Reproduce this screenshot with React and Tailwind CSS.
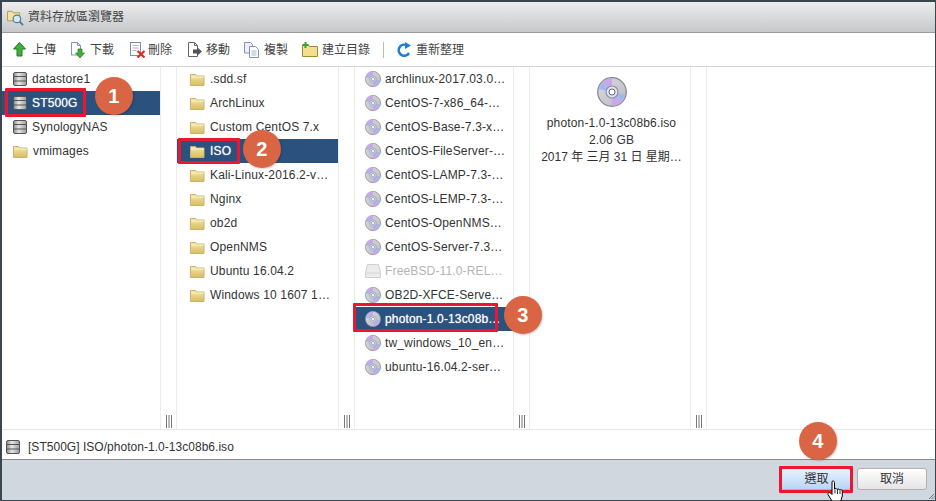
const FONT = "font-['Liberation_Sans','Noto_Sans_CJK_TC',sans-serif]";

function Db({ className = "" }) {
  return (
    <svg width="14" height="14" viewBox="0 0 14 14" className={className}>
      <defs>
        <linearGradient id="dbg" x1="0" x2="1" y1="0" y2="0">
          <stop offset="0" stopColor="#8a8a8a" />
          <stop offset="0.4" stopColor="#e6e6e6" />
          <stop offset="1" stopColor="#9c9c9c" />
        </linearGradient>
      </defs>
      <rect x="0.5" y="0.5" width="13" height="13" rx="1.5" fill="url(#dbg)" stroke="#555" />
      <path d="M1 4.500h12M1 9h12" stroke="#555" strokeWidth="1" />
    </svg>
  );
}

function Folder({ className = "" }) {
  return (
    <svg width="15" height="13" viewBox="0 0 15 13" className={className}>
      <defs>
        <linearGradient id="fg" x1="0" x2="0" y1="0" y2="1">
          <stop offset="0" stopColor="#f6e6a6" />
          <stop offset="1" stopColor="#d9bd62" />
        </linearGradient>
      </defs>
      <path d="M0.5 3V1.500h5l1 1.500h7.500V12.500H0.5z" fill="url(#fg)" stroke="#c8b26e" />
      <path d="M1 4h13" stroke="#fbf3cf" />
    </svg>
  );
}

function Cd({ size = 16, className = "" }) {
  const id = "cd" + size;
  return (
    <svg width={size} height={size} viewBox="0 0 30 30" className={className}>
      <defs>
        <linearGradient id={id} x1="0" x2="1" y1="0" y2="1">
          <stop offset="0" stopColor="#dcdce0" />
          <stop offset="1" stopColor="#b8b8c0" />
        </linearGradient>
      </defs>
      <circle cx="15" cy="15" r="14.3" fill={"url(#" + id + ")"} stroke="#85858c" strokeWidth="1.2" />
      <path d="M15 15L5 5A14 14 0 0 1 15 1z" fill="#c8a8e8" />
      <path d="M15 15L5 5A14 14 0 0 0 1.500 12z" fill="#a0b8ec" />
      <path d="M15 15L25 25A14 14 0 0 1 15 29z" fill="#c8a8e8" />
      <path d="M15 15L25 25A14 14 0 0 0 28.500 18z" fill="#a0b8ec" />
      <circle cx="15" cy="15" r="6" fill="#e0e2ec" stroke="#8e94aa" strokeWidth="1.2" />
      <circle cx="15" cy="15" r="3" fill="#fff" stroke="#666c84" strokeWidth="1" />
    </svg>
  );
}

function Drive() {
  return (
    <svg width="16" height="14" viewBox="0 0 16 14" className="shrink-0">
      <path d="M2.500 0.5h11L15.500 9v4.500H0.5V9z" fill="#ececec" stroke="#d0d0d0" />
      <path d="M1 9h14" stroke="#d4d4d4" />
    </svg>
  );
}

const col1 = [
  { t: "datastore1", i: "db" },
  { t: "ST500G", i: "db", sel: true },
  { t: "SynologyNAS", i: "db" },
  { t: "vmimages", i: "folder" },
];
const col2 = [".sdd.sf", "ArchLinux", "Custom CentOS 7.x", "ISO", "Kali-Linux-2016.2-v…", "Nginx", "ob2d", "OpenNMS", "Ubuntu 16.04.2", "Windows 10 1607 1…"].map(
  (t) => ({ t, i: "folder", sel: t === "ISO" })
);
const col3 = [
  "archlinux-2017.03.0…",
  "CentOS-7-x86_64-…",
  "CentOS-Base-7.3-x…",
  "CentOS-FileServer-…",
  "CentOS-LAMP-7.3-…",
  "CentOS-LEMP-7.3-…",
  "CentOS-OpenNMS…",
  "CentOS-Server-7.3…",
  "FreeBSD-11.0-REL…",
  "OB2D-XFCE-Serve…",
  "photon-1.0-13c08b…",
  "tw_windows_10_en…",
  "ubuntu-16.04.2-ser…",
].map((t) => ({ t, i: t.startsWith("FreeBSD") ? "hd" : "cd", sel: t.startsWith("photon"), dim: t.startsWith("FreeBSD") }));

function Badge({ n, className }) {
  return (
    <div className={"absolute w-[38px] h-[38px] rounded-full bg-[#d96544] text-white text-[20px] font-bold flex items-center justify-center shadow-[1px_1px_2px_rgba(0,0,0,0.2)] " + className}>
      {n}
    </div>
  );
}

function RedBox({ className }) {
  return <div className={"absolute border-[3px] border-[#e8182e] rounded-[1px] " + className} />;
}

function Row({ item, indent }) {
  return (
    <div className={"h-6 flex items-center whitespace-nowrap " + indent + " " + (item.sel ? "bg-[#2b527f] text-white [text-shadow:0_0_1px_rgba(255,255,255,0.7)]" : item.dim ? "text-[#b4b4b4]" : "text-[#333]")}>
      {item.i === "db" && <Db className="shrink-0 mr-[5px]" />}
      {item.i === "folder" && <Folder className="shrink-0 mr-[5px]" />}
      {item.i === "cd" && <Cd size={16} className="shrink-0 mr-[4px]" />}
      {item.i === "hd" && <div className="mr-[4px]"><Drive /></div>}
      <span>{item.t}</span>
    </div>
  );
}

function Grip() {
  return (
    <div className="w-[17px] border-x border-[#ececec] shrink-0 flex items-end justify-center pb-[1px]">
      <svg width="8" height="13" viewBox="0 0 8 13">
        <path d="M1.500 0v13M4 0v13M6.500 0v13" stroke="#777" strokeWidth="1" />
      </svg>
    </div>
  );
}

function Column({ items, width, indent, children }) {
  return (
    <div className={"relative shrink-0 " + width}>
      {items.map((it) => (
        <Row key={it.t} item={it} indent={indent} />
      ))}
      {children}
    </div>
  );
}

function Tool({ icon, label, className }) {
  return (
    <div className={"flex items-center whitespace-nowrap " + className}>
      {icon}
      <span>{label}</span>
    </div>
  );
}

const IUp = (
  <svg width="13" height="15" viewBox="0 0 13 15">
    <path d="M6.500 0.5L12.500 7H9V14H4V7H0.5z" fill="#3fae3a" stroke="#217c1e" />
  </svg>
);
const IDown = (
  <svg width="15" height="16" viewBox="0 0 15 16">
    <path d="M1.500 0.5h6l3 3V13h-9z" fill="#fff" stroke="#7d95b8" />
    <path d="M7.500 0.5v3h3" fill="none" stroke="#7d95b8" />
    <path d="M8 7h4v4h2.500l-4.500 5-4.500-5H8z" fill="#3fae3a" stroke="#217c1e" strokeWidth="0.7" />
  </svg>
);
const IDel = (
  <svg width="15" height="16" viewBox="0 0 15 16">
    <rect x="0.5" y="0.5" width="10" height="13" fill="#fff" stroke="#7d8ea8" />
    <path d="M2.500 3.500h6M2.500 6h6M2.500 8.500h4" stroke="#b0b8c8" />
    <path d="M7.500 9l7 6.500M14.500 9l-7 6.500" stroke="#d82a20" strokeWidth="2.2" />
  </svg>
);
const IMove = (
  <svg width="15" height="16" viewBox="0 0 15 16">
    <path d="M1.500 0.5h6l3 3V14.500h-9z" fill="#fff" stroke="#666" />
    <path d="M7.500 0.500v3h3" fill="none" stroke="#666" />
    <path d="M6 7.500h4V5l5 4.500L10 14v-2.500H6z" fill="#555" />
  </svg>
);
const ICopy = (
  <svg width="16" height="16" viewBox="0 0 16 16">
    <path d="M0.5 0.5h6l2 2V11h-8z" fill="#eef2f8" stroke="#7d95b8" />
    <path d="M5.500 4.500h6l3 3v8h-9z" fill="#fff" stroke="#7d95b8" />
    <path d="M7.500 9h5M7.500 11h5M7.500 13h5" stroke="#a6b6cc" />
  </svg>
);
const INew = (
  <svg width="16" height="15" viewBox="0 0 16 15">
    <path d="M0.5 14.500V3h6l1 1.500h8v10z" fill="#f3dd8e" stroke="#a58a35" />
    <path d="M3.500 0v6M0.5 3h6" stroke="#37a52f" strokeWidth="2" />
  </svg>
);
const IRefresh = (
  <svg width="15" height="15" viewBox="0 0 15 15">
    <path d="M12 11A5.500 5.500 0 1 1 9.500 3.200" fill="none" stroke="#1f7fd6" strokeWidth="2.600" />
    <path d="M8 0l6 3.500-6 3.500z" fill="#1f7fd6" />
  </svg>
);

export default function App() {
  return (
    <div className={"relative w-[936px] h-[501px] overflow-hidden bg-[#3a4650] pt-[2px] pl-[2px] pr-px pb-px text-[12px] leading-none tracking-[0.15px] text-[#333] " + FONT}>
      <div className="flex flex-col h-full bg-white">
        <div className="h-[31px] shrink-0 flex items-center gap-[4px] pl-[5px] text-[#444] tracking-normal bg-gradient-to-b from-[#ededed] to-[#c6c8ca] border-b border-[#9a9a9a]">
          <svg width="17" height="17" viewBox="0 0 18 17">
            <path d="M0.5 12V2h5l1 1.500h7V12z" fill="#f3e2a2" stroke="#b69a4c" />
            <circle cx="10.500" cy="10" r="4" fill="#d7e8f3" stroke="#4d7e9c" strokeWidth="1.300" />
            <path d="M13.500 13l3.500 3.500" stroke="#4d7e9c" strokeWidth="2" />
          </svg>
          <span>資料存放區瀏覽器</span>
        </div>
        <div className="h-[34px] shrink-0 flex items-center pl-[11px] border-b border-[#d4d4d4] text-[#444] tracking-normal">
          <Tool icon={IUp} label="上傳" className="gap-[6px]" />
          <Tool icon={IDown} label="下載" className="gap-[5px] ml-[14px]" />
          <Tool icon={IDel} label="刪除" className="gap-[3px] ml-[16px]" />
          <Tool icon={IMove} label="移動" className="gap-[4px] ml-[15px]" />
          <Tool icon={ICopy} label="複製" className="gap-[4px] ml-[14px]" />
          <Tool icon={INew} label="建立目錄" className="gap-[4px] ml-[14px]" />
          <div className="w-px h-[16px] bg-[#bbb] ml-[13px]" />
          <Tool icon={IRefresh} label="重新整理" className="gap-[4px] ml-[13px]" />
        </div>
        <div className="h-[363px] shrink-0 flex border-b border-[#e6e6e6]">
          <Column items={col1} width="w-[158px]" indent="pl-[11px]">
            <RedBox className="left-[3px] top-[21px] w-[81px] h-[29px]" />
            <Badge n="1" className="left-[93px] top-[10px]" />
          </Column>
          <Grip />
          <Column items={col2} width="w-[161px]" indent="pl-[13px]">
            <RedBox className="left-px top-[71px] w-[62px] h-[26px]" />
            <Badge n="2" className="left-[66px] top-[63px]" />
          </Column>
          <Grip />
          <Column items={col3} width="w-[158px]" indent="pl-[10px]">
            <RedBox className="-left-[2px] top-[236px] w-[145px] h-[29px]" />
            <Badge n="3" className="left-[149px] top-[229px]" />
          </Column>
          <Grip />
          <div className="w-[160px] shrink-0 flex flex-col items-center pt-[10px] pl-[3px] text-center whitespace-nowrap">
            <Cd size={30} />
            <div className="mt-[8px] leading-[17px]">
              <div>photon-1.0-13c08b6.iso</div>
              <div>2.06 GB</div>
              <div className="tracking-normal">2017 年 三月 31 日 星期…</div>
            </div>
          </div>
          <Grip />
          <div className="flex-1" />
        </div>
        <div className="h-[30px] shrink-0 flex items-center gap-[8px] pl-[4px] pt-[4px] border-b border-[#8a8a8a] tracking-[0.03px]">
          <Db />
          <span>[ST500G] ISO/photon-1.0-13c08b6.iso</span>
        </div>
        <div className="flex-1 bg-[#d0d7df] flex items-start justify-end gap-[6px] pt-[8px] pr-[8px] relative tracking-normal">
          <div className="relative w-[71px] h-[22px] rounded-[3px] border border-[#a5b5c8] bg-gradient-to-b from-[#e8f2fc] to-[#b9d5f6] flex items-center justify-center pl-[2px]">
            選取
            <RedBox className="-left-[2px] -top-[3px] w-[74px] h-[27px]" />
          </div>
          <div className="w-[70px] h-[22px] rounded-[3px] border border-[#b0b0b0] bg-gradient-to-b from-white to-[#e4e4e4] flex items-center justify-center">
            取消
          </div>
          <svg width="8" height="8" viewBox="0 0 8 8" className="absolute right-0 bottom-0">
            <path d="M7 2L2 7M7 4.500L4.500 7M7 6.500L6.500 7" stroke="#777" />
          </svg>
        </div>
      </div>
      <Badge n="4" className="left-[799px] top-[422px]" />
      <svg width="18" height="22" viewBox="0 0 18 22" className="absolute left-[827px] top-[480px]">
        <path d="M5 1.500c1-1 2.500-.5 2.500 1V9l1-.5c1 0 1.500.5 1.500 1l1-.5c1 0 1.500.5 1.500 1l1-.3c1 0 1.800.6 1.800 1.600V16l-1.500 5H5L1 14.500c-.5-1.500 1-2.500 2.500-1.500L5 14.500z" fill="#fff" stroke="#000" strokeWidth="1" />
        <path d="M8 9.500v4M10.500 10v4M13 10.500v3.500" stroke="#000" strokeWidth="0.8" />
      </svg>
    </div>
  );
}
